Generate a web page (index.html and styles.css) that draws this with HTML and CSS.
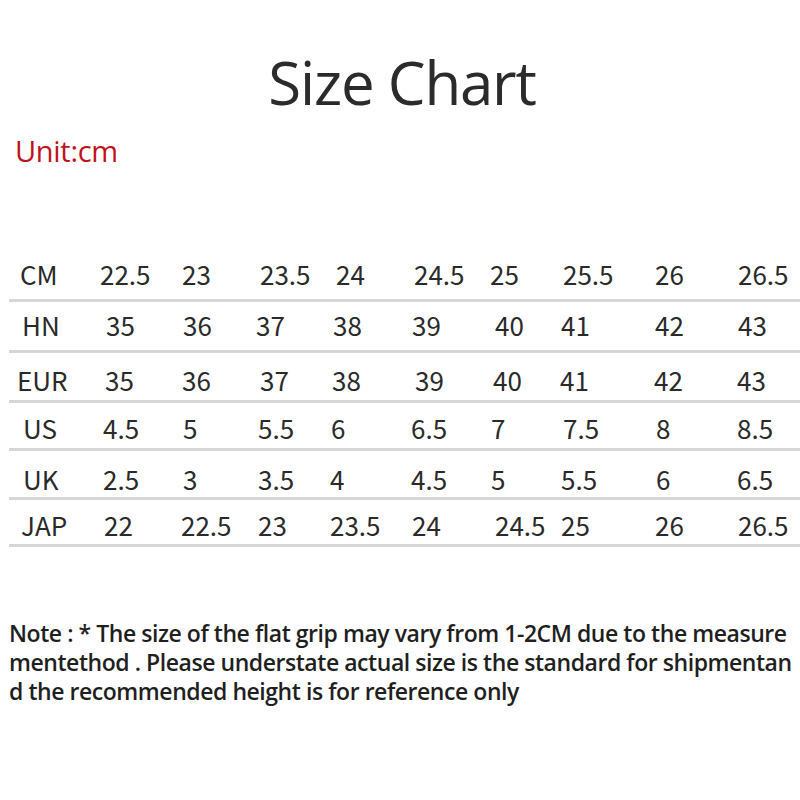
FILE: index.html
```html
<!DOCTYPE html>
<html lang="en">
<head>
<meta charset="utf-8">
<title>Size Chart</title>
<link rel="stylesheet" href="styles.css">
</head>
<body>
<main class="page">
  <h1 class="title">Size Chart</h1>
  <p class="unit">Unit:cm</p>

  <div class="chart">
    <div class="row row-1">
      <span class="cell">CM</span><span class="cell l3">22.5</span><span class="cell">23</span><span class="cell r2">23.5</span><span class="cell r5">24</span><span class="cell r3">24.5</span><span class="cell l1">25</span><span class="cell r2">25.5</span><span class="cell">26</span><span class="cell r1">26.5</span>
    </div>
    <div class="row row-2">
      <span class="cell r2">HN</span><span class="cell r3">35</span><span class="cell r1">36</span><span class="cell l2">37</span><span class="cell r2">38</span><span class="cell r1">39</span><span class="cell r4">40</span><span class="cell">41</span><span class="cell">42</span><span class="cell r1">43</span>
    </div>
    <div class="row row-3">
      <span class="cell l3">EUR</span><span class="cell r2">35</span><span class="cell">36</span><span class="cell r2">37</span><span class="cell r1">38</span><span class="cell r4">39</span><span class="cell r2">40</span><span class="cell l1">41</span><span class="cell l1">42</span><span class="cell">43</span>
    </div>
    <div class="row row-4">
      <span class="cell r3">US</span><span class="cell">4.5</span><span class="cell r1">5</span><span class="cell">5.5</span><span class="cell">6</span><span class="cell">6.5</span><span class="cell">7</span><span class="cell r2">7.5</span><span class="cell r1">8</span><span class="cell">8.5</span>
    </div>
    <div class="row row-5">
      <span class="cell r3">UK</span><span class="cell">2.5</span><span class="cell r1">3</span><span class="cell">3.5</span><span class="cell l1">4</span><span class="cell">4.5</span><span class="cell">5</span><span class="cell">5.5</span><span class="cell r1">6</span><span class="cell">6.5</span>
    </div>
    <div class="row row-6">
      <span class="cell r1">JAP</span><span class="cell r1">22</span><span class="cell l1">22.5</span><span class="cell">23</span><span class="cell l1">23.5</span><span class="cell r1">24</span><span class="cell r4">24.5</span><span class="cell">25</span><span class="cell">26</span><span class="cell r1">26.5</span>
    </div>
  </div>

  <div class="note">
    <span class="note-line">Note : * The size of the flat grip may vary from 1-2CM due to the measure</span>
    <span class="note-line">mentethod . Please understate actual size is the standard for shipmentan</span>
    <span class="note-line">d the recommended height is for reference only</span>
  </div>
</main>
</body>
</html>
```

FILE: styles.css
```css
html, body {
  margin: 0;
  padding: 0;
  background: #ffffff;
}

.page {
  width: 800px;
  height: 800px;
  overflow: hidden;
  display: flex;
  flex-direction: column;
}

.title {
  margin: 47px 0 0 0;
  font-family: "Open Sans", "Liberation Sans", sans-serif;
  font-weight: 400;
  font-size: 60px;
  line-height: 70px;
  letter-spacing: -1.2px;
  color: #2b2b2d;
  text-align: center;
  padding-left: 4px;
}

.unit {
  margin: 19px 0 0 0;
  padding-left: 15px;
  font-family: "Open Sans", "Liberation Sans", sans-serif;
  font-size: 29px;
  line-height: 30px;
  letter-spacing: -0.3px;
  color: #c1121c;
}

.chart {
  margin: 84px 0 0 9px;
  width: 791px;
  font-family: "Noto Sans CJK SC", "Noto Sans", sans-serif;
  font-size: 26px;
  line-height: 30px;
  color: #2a2a2a;
}

.row {
  display: grid;
  grid-template-columns: 83px 79px 76px 73px 80px 80px 70px 94px 82px 1fr;
  padding-left: 11px;
  border-bottom: 3px solid #d6d6d6;
}

.row-1 { padding-top: 9px;  padding-bottom: 10px; }
.row-2 { padding-top: 8px;  padding-bottom: 10px; }
.row-3 { padding-top: 12px; padding-bottom: 5px; }
.row-4 { padding-top: 10px; padding-bottom: 5px; }
.row-5 { padding-top: 13px; padding-bottom: 3px; }
.row-6 { padding-top: 10px; padding-bottom: 4px; }

.cell {
  white-space: nowrap;
}

.l3 { margin-left: -3px; }
.l2 { margin-left: -2px; }
.l1 { margin-left: -1px; }
.r1 { margin-left: 1px; }
.r2 { margin-left: 2px; }
.r3 { margin-left: 3px; }
.r4 { margin-left: 4px; }
.r5 { margin-left: 5px; }

.note {
  margin-top: 72px;
  padding-left: 9px;
  display: flex;
  flex-direction: column;
  font-family: "Open Sans", "Liberation Sans", sans-serif;
  font-weight: 600;
  font-size: 23px;
  line-height: 29px;
  letter-spacing: -0.45px;
  color: #1f1f1f;
}

.note-line {
  white-space: nowrap;
}
```
